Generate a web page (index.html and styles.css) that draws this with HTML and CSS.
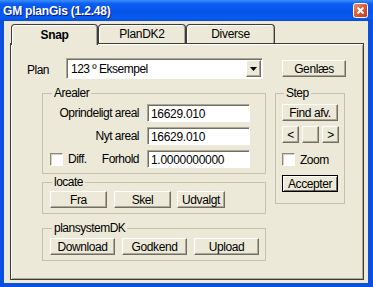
FILE: index.html
```html
<!DOCTYPE html>
<html>
<head>
<meta charset="UTF-8">
<title>GM planGis</title>
<link rel="stylesheet" href="styles.css">
</head>
<body>
<div class="window">
  <div class="titlebar">
    <span class="title">GM planGis (1.2.48)</span>
    <span class="close">
      <svg width="15" height="15" viewBox="0 0 15 15">
        <defs>
          <linearGradient id="cg" x1="0" y1="0" x2="1" y2="1">
            <stop offset="0" stop-color="#f0906c"/>
            <stop offset="0.5" stop-color="#dc5a34"/>
            <stop offset="1" stop-color="#c2391c"/>
          </linearGradient>
        </defs>
        <rect x="0.5" y="0.5" width="14" height="14" rx="2" fill="url(#cg)" stroke="#fff"/>
        <path d="M4.5 4.5l6 6M10.5 4.5l-6 6" stroke="#fff" stroke-width="2"/>
      </svg>
    </span>
  </div>
  <div class="client">
    <div class="tabs">
      <div class="tab active">Snap</div>
      <div class="tab">PlanDK2</div>
      <div class="tab wide">Diverse</div>
    </div>
    <div class="panel">
      <div class="plan-row">
        <span class="plan-lbl">Plan</span>
        <div class="combo">
          <span class="combo-text">123 º Eksempel</span>
          <span class="combo-btn">
            <svg width="7" height="4" viewBox="0 0 7 4"><path d="M0 0h7L3.5 4z" fill="#000"/></svg>
          </span>
        </div>
        <button class="btn genlaes">Genlæs</button>
      </div>
      <div class="columns">
        <div class="left-col">
          <fieldset class="group arealer">
            <legend>Arealer</legend>
            <div class="fields">
              <label class="lbl">Oprindeligt areal</label>
              <input class="txt" type="text" value="16629.010">
              <label class="lbl">Nyt areal</label>
              <input class="txt" type="text" value="16629.010">
              <div class="diff-cell">
                <span class="check"></span><span>Diff.</span>
                <label class="forhold">Forhold</label>
              </div>
              <input class="txt" type="text" value="1.0000000000">
            </div>
          </fieldset>
          <fieldset class="group locate">
            <legend>locate</legend>
            <div class="btn-row">
              <button class="btn w57">Fra</button>
              <button class="btn w57">Skel</button>
              <button class="btn w48">Udvalgt</button>
            </div>
          </fieldset>
          <fieldset class="group plansys">
            <legend>plansystemDK</legend>
            <div class="btn-row">
              <button class="btn w65">Download</button>
              <button class="btn w65">Godkend</button>
              <button class="btn w65">Upload</button>
            </div>
          </fieldset>
        </div>
        <fieldset class="group step">
          <legend>Step</legend>
          <div class="step-body">
            <button class="btn w56">Find afv.</button>
            <div class="arrows">
              <button class="btn sq">&lt;</button>
              <button class="btn sq"></button>
              <button class="btn sq">&gt;</button>
            </div>
            <div class="zoom-row"><span class="check"></span><span>Zoom</span></div>
            <button class="btn w56 default">Accepter</button>
          </div>
        </fieldset>
      </div>
    </div>
  </div>
</div>
</body>
</html>
```
FILE: styles.css
```css
body {
  margin: 0;
  font-family: "Liberation Sans", Arial, sans-serif;
  font-size: 12px;
  letter-spacing: -0.5px;
  color: #000;
}
.window {
  width: 373px;
  height: 287px;
  display: flex;
  flex-direction: column;
  background: #0b4fe0;
}
.titlebar {
  height: 21px;
  flex: none;
  display: flex;
  align-items: center;
  justify-content: space-between;
  padding: 0 5px 0 3px;
  background: linear-gradient(#3d8ff9, #0a5ff2 18%, #0553e8 55%, #085cf3 88%, #0648d6);
}
.title {
  color: #fff;
  font-weight: bold;
  font-size: 12px;
  letter-spacing: -0.2px;
  text-shadow: 1px 1px #0c1a8a;
}
.close {
  display: flex;
}
.client {
  flex: 1;
  margin: 0 5px 4px 4px;
  background: #ece9d8;
  padding: 3px 4px 3px 6px;
  display: flex;
  flex-direction: column;
}

/* tabs */
.tabs {
  display: flex;
  align-items: flex-end;
  height: 19px;
  padding-left: 1px;
  position: relative;
  z-index: 1;
}
.tab {
  box-sizing: border-box;
  width: 88px;
  height: 19px;
  border: 1px solid #3c3c3c;
  border-bottom: none;
  border-radius: 4px 4px 0 0;
  text-align: center;
  line-height: 18px;
  letter-spacing: -0.3px;
  background: #ece9d8;
  box-shadow: inset 1px 1px #fff, inset -1px 0 #aca899;
}
.tab.active {
  width: 87px;
  height: 21px;
  margin-bottom: -2px;
  font-weight: bold;
  line-height: 21px;
}
.tab.wide {
  width: 89px;
}
.panel {
  flex: 1;
  border: 1px solid #3c3c3c;
  box-shadow: inset 1px 1px #fff, inset -1px -1px #aca899;
  padding: 14px 0 0 16px;
}

/* plan row */
.plan-row {
  display: flex;
  align-items: center;
  height: 21px;
}
.plan-lbl {
  width: 39px;
  padding-top: 3px;
}
.combo {
  box-sizing: border-box;
  width: 197px;
  height: 21px;
  display: flex;
  align-items: center;
  background: #fff;
  border: 1px solid;
  border-color: #aca899 #fff #fff #aca899;
  box-shadow: inset 1px 1px #716f64;
  padding: 1px 1px 1px 2px;
}
.combo-text {
  flex: 1;
  padding-left: 2px;
}
.combo-btn {
  box-sizing: border-box;
  width: 15px;
  height: 17px;
  display: flex;
  align-items: center;
  justify-content: center;
  background: #ece9d8;
  border: 1px solid;
  border-color: #fff #716f64 #716f64 #fff;
  box-shadow: inset -1px -1px #aca899;
}
.genlaes {
  width: 64px;
  margin-left: 19px;
}

/* buttons */
.btn {
  box-sizing: border-box;
  height: 17px;
  padding: 0;
  font-family: inherit;
  font-size: 12px;
  letter-spacing: -0.4px;
  color: #000;
  background: #ece9d8;
  border: 1px solid;
  border-color: #fff #716f64 #716f64 #fff;
  box-shadow: inset -1px -1px #aca899;
  line-height: 14px;
}
.btn.default {
  border-color: #000;
  box-shadow: inset 1px 1px #fff, inset -1px -1px #716f64;
}
.w48 { width: 48px; }
.w56 { width: 56px; }
.w57 { width: 57px; }
.w65 { width: 65px; }
.sq { width: 17px; }

/* group boxes */
.columns {
  display: flex;
  align-items: flex-start;
  gap: 9px;
  margin: 8px 0 0 15px;
}
.left-col {
  width: 224px;
  display: flex;
  flex-direction: column;
}
.group {
  box-sizing: border-box;
  margin: 0;
  min-width: 0;
  border: 1px solid #c4c1b1;
  padding: 4px 6px 5px 7px;
}
.group legend {
  padding: 0 2px;
  margin-left: 2px;
  line-height: 13px;
}
.arealer {
  width: 224px;
}
.fields {
  display: grid;
  grid-template-columns: 89px 103px;
  column-gap: 8px;
  row-gap: 5px;
  align-items: center;
}
.lbl {
  text-align: right;
}
.txt {
  box-sizing: border-box;
  width: 103px;
  height: 18px;
  margin: 0;
  padding: 1px 3px 0;
  font-family: inherit;
  font-size: 12px;
  letter-spacing: -0.3px;
  background: #fff;
  border: 1px solid;
  border-color: #aca899 #fff #fff #aca899;
  box-shadow: inset 1px 1px #716f64;
  outline: none;
}
.diff-cell {
  display: flex;
  align-items: center;
}
.forhold {
  margin-left: auto;
}
.check {
  box-sizing: border-box;
  width: 13px;
  height: 13px;
  margin-right: 5px;
  background: #fff;
  border: 1px solid;
  border-color: #8d8a7d #fff #fff #8d8a7d;
  box-shadow: inset 1px 1px #d4d0c0;
}
.locate {
  margin-top: 2px;
  padding-top: 2px;
}
.locate legend {
  margin-top: 1px;
}
.plansys {
  margin-top: 8px;
  padding-top: 3px;
}
.btn-row {
  display: flex;
  gap: 7px;
}
.locate .btn-row .w48 {
  margin-left: -1px;
}

/* step */
.step {
  width: 70px;
  padding: 4px 5px 11px 6px;
}
.step-body {
  display: flex;
  flex-direction: column;
  align-items: flex-start;
}
.arrows {
  display: flex;
  gap: 3px;
  margin-top: 5px;
}
.zoom-row {
  display: flex;
  align-items: center;
  height: 13px;
  margin-top: 10px;
}
.zoom-row .check {
  margin-right: 5px;
}
.step .default {
  margin-top: 9px;
}
```
